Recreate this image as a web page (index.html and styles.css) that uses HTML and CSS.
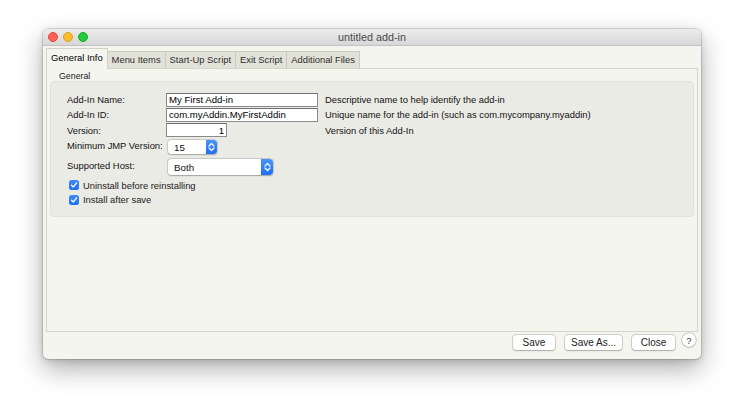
FILE: index.html
```html
<!DOCTYPE html>
<html lang="en">
<head>
    <meta charset="UTF-8">
    <title>untitled add-in</title>
    <link rel="stylesheet" href="styles.css">
</head>
<body>
    <div class="window">
        <div class="titlebar">
            <div class="lights">
                <span class="light red"></span>
                <span class="light yellow"></span>
                <span class="light green"></span>
            </div>
            <div class="title">untitled add-in</div>
            <div></div>
        </div>

        <div class="content">
            <div class="tabs">
                <div class="tab active">General Info</div>
                <div class="tab">Menu Items</div>
                <div class="tab">Start-Up Script</div>
                <div class="tab">Exit Script</div>
                <div class="tab">Additional Files</div>
            </div>

            <div class="panel">
                <div class="group_label">General</div>
                <div class="group">
                    <div class="form">
                        <div class="lbl">Add-In Name:</div>
                        <div><input type="text" class="field wide" value="My First Add-in"></div>
                        <div class="desc">Descriptive name to help identify the add-in</div>

                        <div class="lbl">Add-In ID:</div>
                        <div><input type="text" class="field wide" value="com.myAddin.MyFirstAddin"></div>
                        <div class="desc">Unique name for the add-in (such as com.mycompany.myaddin)</div>

                        <div class="lbl">Version:</div>
                        <div><input type="text" class="field short" value="1"></div>
                        <div class="desc">Version of this Add-In</div>

                        <div class="lbl up">Minimum JMP Version:</div>
                        <div>
                            <div class="popup small">
                                <span class="popup_text">15</span>
                                <span class="stepper">
                                    <svg width="7" height="10" viewBox="0 0 7 10"><path d="M1 4 L3.5 1.5 L6 4 M1 6 L3.5 8.5 L6 6" fill="none" stroke="#fff" stroke-width="1.2" stroke-linecap="round" stroke-linejoin="round"/></svg>
                                </span>
                            </div>
                        </div>
                        <div></div>

                        <div class="lbl up">Supported Host:</div>
                        <div>
                            <div class="popup big">
                                <span class="popup_text">Both</span>
                                <span class="stepper">
                                    <svg width="7" height="10" viewBox="0 0 7 10"><path d="M1 4 L3.5 1.5 L6 4 M1 6 L3.5 8.5 L6 6" fill="none" stroke="#fff" stroke-width="1.2" stroke-linecap="round" stroke-linejoin="round"/></svg>
                                </span>
                            </div>
                        </div>
                        <div></div>

                        <div class="check_row">
                            <span class="check">
                                <svg width="8" height="8" viewBox="0 0 8 8"><path d="M1.5 4.2 L3.3 6 L6.6 1.8" fill="none" stroke="#fff" stroke-width="1.3" stroke-linecap="round" stroke-linejoin="round"/></svg>
                            </span>
                            Uninstall before reinstalling
                        </div>
                        <div class="check_row">
                            <span class="check">
                                <svg width="8" height="8" viewBox="0 0 8 8"><path d="M1.5 4.2 L3.3 6 L6.6 1.8" fill="none" stroke="#fff" stroke-width="1.3" stroke-linecap="round" stroke-linejoin="round"/></svg>
                            </span>
                            Install after save
                        </div>
                    </div>
                </div>
            </div>

            <div class="footer">
                <button class="btn save">Save</button>
                <button class="btn save_as">Save As...</button>
                <button class="btn close">Close</button>
                <button class="help">?</button>
            </div>
        </div>
    </div>
</body>
</html>
```

FILE: styles.css
```css
body {
    margin: 0;
    width: 744px;
    height: 416px;
    overflow: hidden;
    background: #ffffff;
    font-family: "Liberation Sans", Arial, sans-serif;
    color: #111111;
    padding: 29px 0 0 43px;
    box-sizing: border-box;
}

.window {
    width: 658px;
    height: 330px;
    background: #f5f5f0;
    border-radius: 5px;
    display: flex;
    flex-direction: column;
    overflow: hidden;
    box-shadow: 0 0 0 0.5px rgba(0,0,0,0.25), 0 10px 26px rgba(0,0,0,0.32), 0 2px 6px rgba(0,0,0,0.12);
}

.titlebar {
    height: 16px;
    display: grid;
    grid-template-columns: 1fr auto 1fr;
    align-items: center;
    background: linear-gradient(#ececec, #d7d7d7);
    border-bottom: 1px solid #c2c2c2;
}

.lights {
    display: flex;
    gap: 5px;
    padding-left: 5px;
}

.light {
    width: 10px;
    height: 10px;
    border-radius: 50%;
    box-sizing: border-box;
}

.red { background: #fe5f57; border: 0.5px solid #e2463f; }
.yellow { background: #febc2e; border: 0.5px solid #e1a116; }
.green { background: #28c840; border: 0.5px solid #14ae2a; }

.title {
    font-size: 10.8px;
    color: #4b4b4b;
}

.content {
    flex: 1;
    display: flex;
    flex-direction: column;
    padding: 3px 3px 0 3px;
}

.tabs {
    display: flex;
    align-items: flex-end;
    height: 19px;
}

.tab {
    height: 16px;
    line-height: 16px;
    padding: 0 4px;
    font-size: 9.4px;
    color: #2e2e2e;
    background: #e2e2d8;
    border: 1px solid #cbcbbf;
    border-bottom: none;
    margin-left: -1px;
}

.tab.active {
    height: 19px;
    line-height: 18px;
    background: #f5f5f0;
    color: #000;
    border-color: #d2d2c7;
    margin-left: 0;
    margin-bottom: -1px;
    position: relative;
    z-index: 1;
    padding-bottom: 1px;
}

.panel {
    flex: 1;
    border: 1px solid #d4d4c9;
    background: #f5f5f0;
    display: flex;
    flex-direction: column;
}

.group_label {
    height: 12px;
    line-height: 14px;
    padding-left: 12px;
    font-size: 8.8px;
    color: #222;
}

.group {
    height: 136px;
    margin: 0 3px;
    background: #ebebe6;
    border: 1px solid #e2e2da;
    border-radius: 4px;
    box-sizing: border-box;
    padding: 10px 0 0 16px;
}

.form {
    display: grid;
    grid-template-columns: 99px 159px auto;
    grid-template-rows: 15px 15px 16px 18px 22px 14px 15px;
    align-items: center;
    font-size: 9.4px;
}

.lbl.up {
    margin-top: -3px;
}

.field {
    display: block;
    box-sizing: border-box;
    height: 14px;
    margin: 0;
    padding: 0 2px;
    border: 1px solid #8a8a8a;
    border-top-color: #6f6f6f;
    background: #ffffff;
    font-family: "Liberation Sans", Arial, sans-serif;
    font-size: 9.6px;
    color: #000;
    outline: none;
}

.field.wide {
    width: 152px;
}

.field.short {
    width: 61px;
    text-align: right;
}

.popup {
    display: flex;
    align-items: stretch;
    margin-left: 2px;
    background: #ffffff;
    border-radius: 3px;
    box-shadow: 0 0 0 0.5px rgba(0,0,0,0.22), 0 0.5px 1.5px rgba(0,0,0,0.22);
    overflow: hidden;
}

.popup.small {
    width: 49px;
    height: 14px;
}

.popup.big {
    width: 105px;
    height: 16px;
}

.popup_text {
    flex: 1;
    padding-left: 6px;
    display: flex;
    align-items: center;
    font-size: 9.8px;
}

.stepper {
    width: 11px;
    background: linear-gradient(#4a94f8, #1f6ff0);
    display: flex;
    align-items: center;
    justify-content: center;
    border-radius: 0 3px 3px 0;
}

.popup.big .stepper {
    width: 12px;
}

.check_row {
    grid-column: 1 / 4;
    display: flex;
    align-items: center;
    gap: 4px;
    padding-left: 2px;
    color: #1a1a1a;
}

.check {
    width: 10px;
    height: 10px;
    border-radius: 2.5px;
    background: linear-gradient(#3d8bf8, #1f6ff0);
    display: flex;
    align-items: center;
    justify-content: center;
}

.footer {
    height: 27px;
    display: flex;
    justify-content: flex-end;
    align-items: flex-start;
    padding: 3px 2px 0 0;
    gap: 10px;
    box-sizing: border-box;
}

.btn {
    height: 15px;
    padding: 0;
    margin: 0;
    border: none;
    border-radius: 3px;
    background: #ffffff;
    box-shadow: 0 0 0 0.5px rgba(0,0,0,0.25), 0 0.5px 1.5px rgba(0,0,0,0.2);
    font-family: "Liberation Sans", Arial, sans-serif;
    font-size: 10px;
    color: #222;
}

.save { width: 42px; }
.save_as { width: 57px; }
.close { width: 43px; }

.help {
    width: 14px;
    height: 14px;
    margin: -2px 0 0 -3px;
    padding: 0;
    border: none;
    border-radius: 50%;
    background: #ffffff;
    box-shadow: 0 0 0 0.5px rgba(0,0,0,0.28), 0 0.5px 1.5px rgba(0,0,0,0.2);
    font-family: "Liberation Sans", Arial, sans-serif;
    font-size: 9.5px;
    color: #333;
}
```
